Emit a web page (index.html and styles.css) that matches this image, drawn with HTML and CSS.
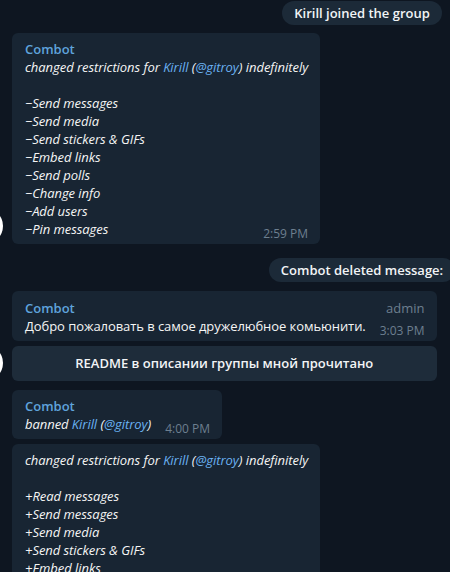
FILE: index.html
```html
<!DOCTYPE html>
<html lang="ru">
<head>
    <meta charset="UTF-8">
    <meta name="viewport" content="width=device-width, initial-scale=1.0">
    <title>Combot</title>
    <link rel="stylesheet" href="styles.css">
</head>
<body>

    <div class="chat">
        <div class="service service-first"><span class="pill">Kirill joined the group</span></div>

        <!-- Combot: ограничения -->
        <div class="group">
            <div class="avatar"></div>
            <div class="stack">
                <div class="bubble">
                    <div class="name">Combot</div>
                    <div class="text italic">
                        changed restrictions for <span class="link">Kirill</span> (<span class="link">@gitroy</span>) indefinitely<br>
                        <br>
                        −Send messages<br>
                        −Send media<br>
                        −Send stickers &amp; GIFs<br>
                        −Embed links<br>
                        −Send polls<br>
                        −Change info<br>
                        −Add users<br>
                        −Pin messages<span class="time">2:59 PM</span>
                    </div>
                </div>
            </div>
        </div>

        <div class="service service-gap"><span class="pill">Combot deleted message:</span></div>

        <!-- удалённое сообщение с кнопкой -->
        <div class="group">
            <div class="avatar"></div>
            <div class="stack">
                <div class="bubble wide">
                    <div class="name-row">
                        <span class="name">Combot</span>
                        <span class="role">admin</span>
                    </div>
                    <div class="text">Добро пожаловать в самое дружелюбное комьюнити.<span class="time">3:03 PM</span></div>
                </div>
                <div class="keyboard">README в описании группы мной прочитано</div>
            </div>
        </div>

        <!-- бан -->
        <div class="group">
            <div class="avatar sticky"></div>
            <div class="stack">
                <div class="bubble">
                    <div class="name">Combot</div>
                    <div class="text italic">banned <span class="link">Kirill</span> (<span class="link">@gitroy</span>)<span class="time">4:00 PM</span></div>
                </div>
                <div class="bubble">
                    <div class="text italic">
                        changed restrictions for <span class="link">Kirill</span> (<span class="link">@gitroy</span>) indefinitely<br>
                        <br>
                        +Read messages<br>
                        +Send messages<br>
                        +Send media<br>
                        +Send stickers &amp; GIFs<br>
                        +Embed links<br>
                        +Send polls<br>
                        +Change info<br>
                        +Add users<br>
                        +Pin messages<span class="time">4:00 PM</span>
                    </div>
                </div>
            </div>
        </div>
    </div>

</body>
</html>
```

FILE: styles.css
```css
body {
    margin: 0;
    background-color: #0e1621;
    font-family: "Open Sans", "Noto Sans", sans-serif;
    font-size: 13px;
    color: #f5f5f5;
    overflow: hidden;
}

.chat {
    width: 724px;
}

.service {
    display: flex;
    justify-content: center;
}

.service-first {
    margin-top: 1px;
    margin-bottom: 8px;
}

.service-gap {
    margin-top: 14px;
    margin-bottom: 9px;
}

.pill {
    display: inline-block;
    height: 24px;
    line-height: 24px;
    padding: 0 12px;
    border-radius: 12px;
    background-color: #1c2a38;
    font-weight: 600;
    color: #f2f4f6;
}

.group {
    display: flex;
    align-items: flex-end;
    gap: 9px;
    margin-bottom: 9px;
}

.avatar {
    flex: none;
    width: 36px;
    height: 36px;
    margin-left: -33px;
    border-radius: 50%;
    background-color: #ffffff;
}

.avatar.sticky {
    position: sticky;
    bottom: 8px;
}

.stack {
    display: flex;
    flex-direction: column;
    align-items: flex-start;
    gap: 5px;
}

.bubble {
    display: flow-root;
    max-width: 400px;
    padding: 7px 12px 6px 13px;
    border-radius: 6px;
    background-color: #182533;
    line-height: 18px;
}

.bubble.wide {
    max-width: none;
    padding-top: 8px;
}

.name {
    font-weight: 600;
    color: #5fa3dc;
}

.name-row {
    display: flex;
    justify-content: space-between;
}

.role {
    color: #6d7f8f;
    margin-left: 20px;
}

.text {
    letter-spacing: -0.07px;
}

.italic {
    font-style: italic;
    letter-spacing: -0.05px;
}

.link {
    color: #6ab2f2;
}

.time {
    float: right;
    margin: 7px 0 -4px 14px;
    font-size: 12px;
    font-style: normal;
    letter-spacing: 0;
    line-height: 14px;
    color: #6d7f8f;
}

.keyboard {
    align-self: stretch;
    height: 35px;
    line-height: 35px;
    border-radius: 6px;
    background-color: #1e2c3a;
    text-align: center;
    font-weight: 600;
    color: #f2f4f6;
}
```
